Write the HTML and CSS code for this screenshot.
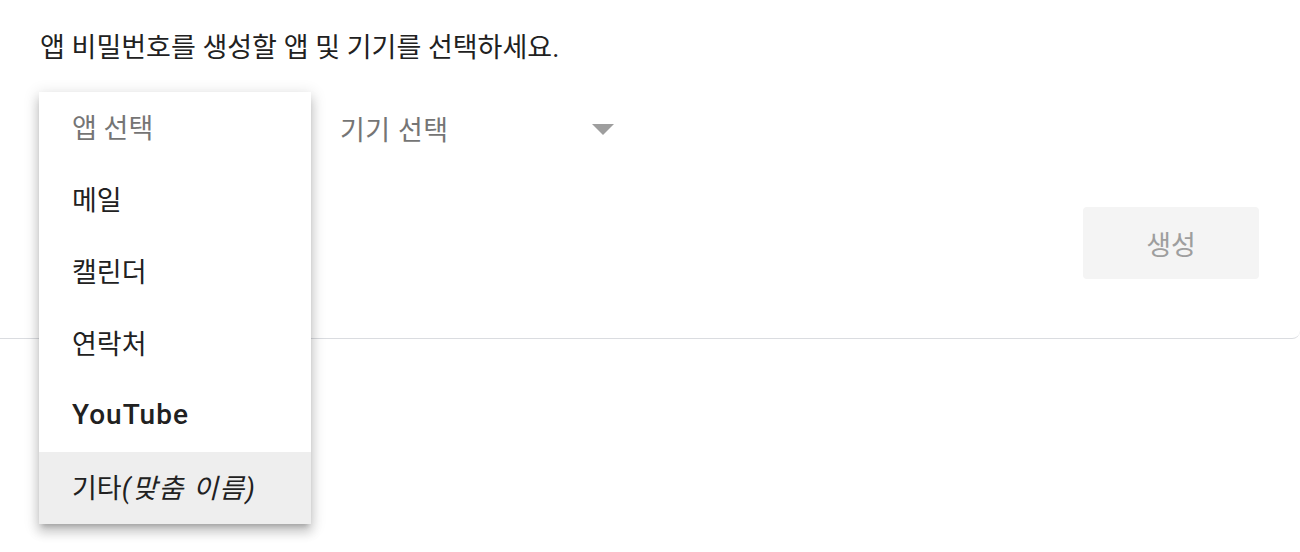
FILE: index.html
```html
<!DOCTYPE html>
<html lang="ko">
<head>
<meta charset="utf-8">
<title>앱 비밀번호</title>
<link rel="stylesheet" href="styles.css">
</head>
<body>
<div class="card">
  <p class="intro">앱 비밀번호를 생성할 앱 및 기기를 선택하세요.</p>
  <div class="selects">
    <div class="select select-app">
      <span class="placeholder">앱 선택</span>
      <ul class="menu">
        <li class="item muted">앱 선택</li>
        <li class="item">메일</li>
        <li class="item">캘린더</li>
        <li class="item">연락처</li>
        <li class="item strong">YouTube</li>
        <li class="item active">기타<em>(맞춤 이름)</em></li>
      </ul>
    </div>
    <div class="select select-device">
      <span class="placeholder">기기 선택</span>
      <span class="arrow"></span>
    </div>
  </div>
  <div class="actions">
    <button class="btn" disabled>생성</button>
  </div>
</div>
</body>
</html>
```

FILE: styles.css
```css
html, body {
  margin: 0;
  padding: 0;
  background: #fff;
}
body {
  font-family: Roboto, "Noto Sans CJK KR", sans-serif;
  color: #202124;
  width: 1300px;
  height: 552px;
  overflow: hidden;
}
.card {
  box-sizing: border-box;
  width: 1300px;
  height: 339px;
  padding: 32px 41px 0 40px;
  border-bottom: 1px solid #dadce0;
  border-bottom-right-radius: 8px;
}
.intro {
  margin: 0;
  font-size: 27px;
  line-height: 32px;
  color: #212121;
}
.selects {
  display: flex;
  margin-top: 28px;
  height: 72px;
}
.select {
  position: relative;
  display: flex;
  align-items: center;
  font-size: 27px;
  color: #757575;
}
.select .placeholder {
  letter-spacing: 0.5px;
}
.select-app {
  width: 300px;
  padding-left: 32px;
  box-sizing: border-box;
}
.select-device {
  width: 274px;
  justify-content: space-between;
}
.arrow {
  width: 0;
  height: 0;
  border-left: 11px solid transparent;
  border-right: 11px solid transparent;
  border-top: 11px solid #9e9e9e;
  margin-top: 2px;
}
.menu {
  position: absolute;
  top: 0;
  left: -1px;
  width: 272px;
  margin: 0;
  padding: 0;
  list-style: none;
  background: #fff;
  box-shadow: 0 8px 10px 1px rgba(0,0,0,.14), 0 3px 14px 2px rgba(0,0,0,.12), 0 5px 5px -3px rgba(0,0,0,.2);
  z-index: 2;
}
.item {
  height: 72px;
  display: flex;
  align-items: center;
  padding-left: 33px;
  font-size: 27px;
  color: #212121;
  padding-bottom: 3px;
  box-sizing: border-box;
}
.item.muted {
  color: #757575;
}
.item.strong {
  font-weight: 500;
  font-size: 28px;
  letter-spacing: 1px;
}
.item.active {
  background: #eeeeee;
}
.item em {
  font-style: italic;
  letter-spacing: 1.5px;
}
.actions {
  display: flex;
  justify-content: flex-end;
  margin-top: 43px;
}
.btn {
  width: 176px;
  height: 72px;
  border: none;
  border-radius: 4px;
  background: #f4f4f4;
  color: #9e9e9e;
  font-family: Roboto, "Noto Sans CJK KR", sans-serif;
  font-size: 27px;
  padding: 0;
}
```
